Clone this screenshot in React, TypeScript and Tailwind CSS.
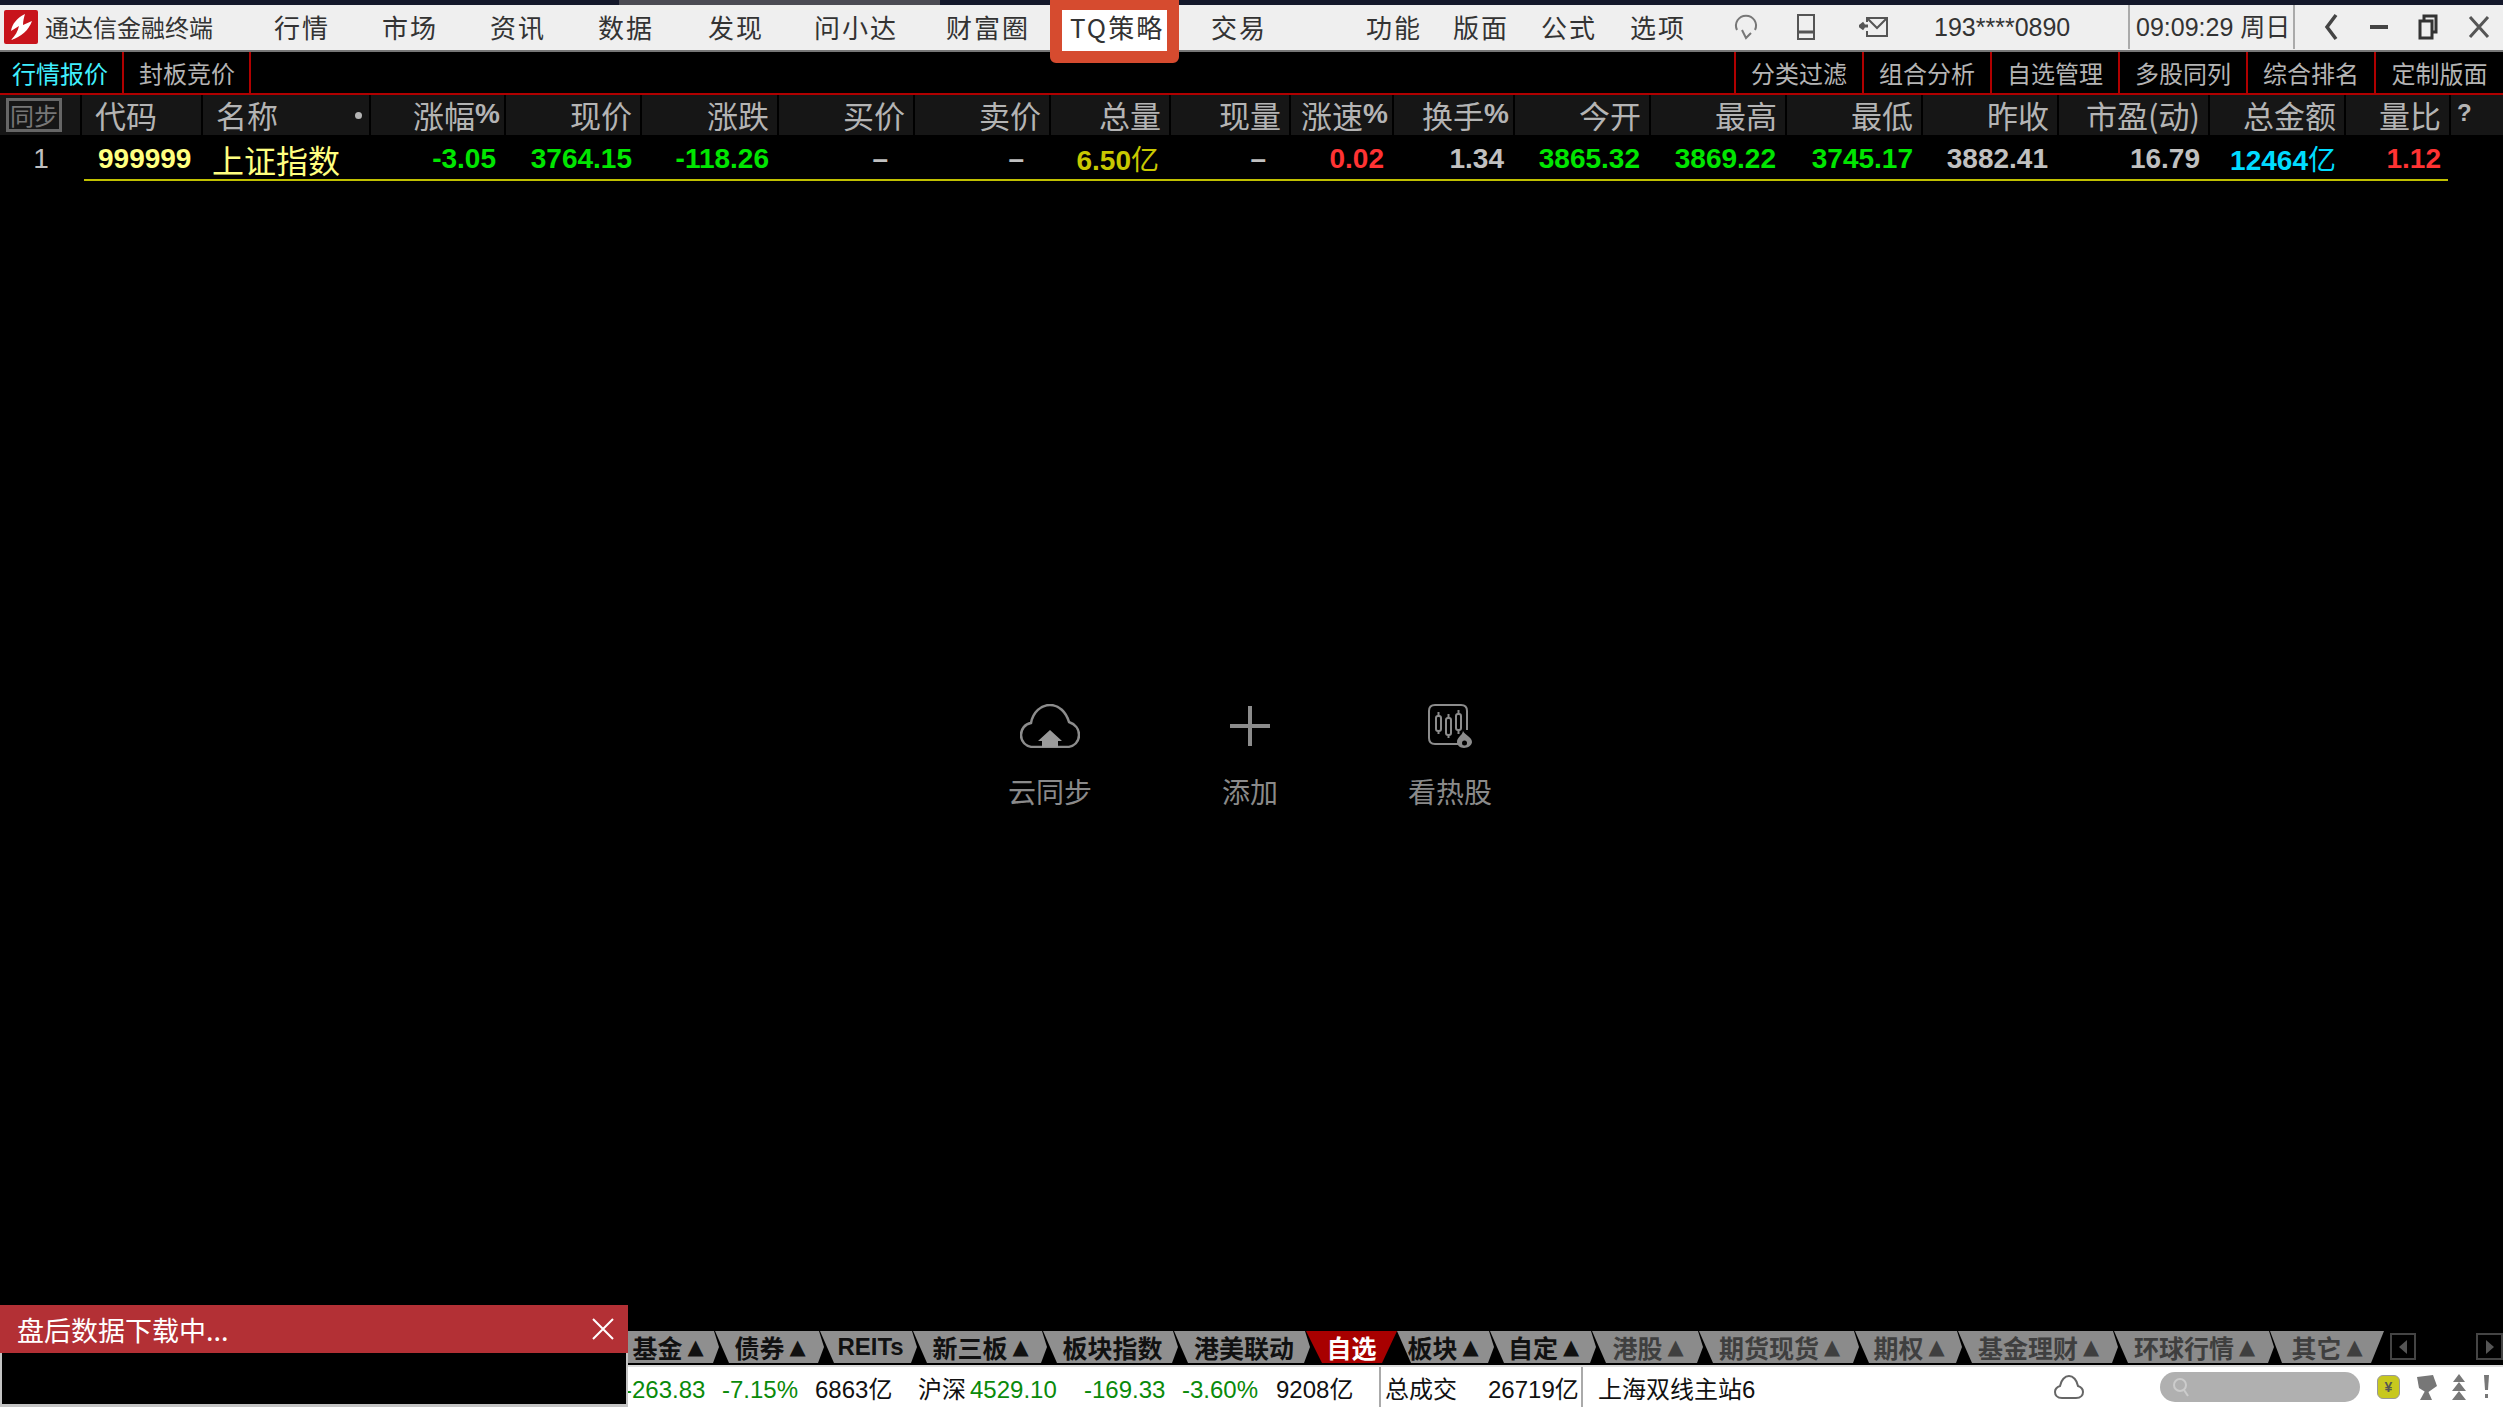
const cjk = "font-['Noto_Sans_CJK_SC',sans-serif]";
const num = "font-['Liberation_Sans','Noto_Sans_CJK_SC',sans-serif]";

const menus = [
  { label: "行情", cls: "ml-[61px] w-[56px]" },
  { label: "市场", cls: "ml-[52px] w-[56px]" },
  { label: "资讯", cls: "ml-[52px] w-[56px]" },
  { label: "数据", cls: "ml-[52px] w-[56px]" },
  { label: "发现", cls: "ml-[54px] w-[56px]" },
  { label: "问小达", cls: "ml-[50px] w-[84px]" },
  { label: "财富圈", cls: "ml-[48px] w-[84px]" },
  { label: "TQ策略", cls: "ml-[40px] w-[96px] relative z-20" },
  { label: "交易", cls: "ml-[45px] w-[56px] relative z-20" },
  { label: "功能", cls: "ml-[99px] w-[56px]" },
  { label: "版面", cls: "ml-[31px] w-[56px]" },
  { label: "公式", cls: "ml-[32px] w-[56px]" },
  { label: "选项", cls: "ml-[33px] w-[56px]" },
];

const rightTools = ["分类过滤", "组合分析", "自选管理", "多股同列", "综合排名", "定制版面"];

const gridCols =
  "grid-cols-[82px_121px_168px_135px_136px_137px_136px_136px_120px_120px_103px_121px_136px_136px_136px_136px_151px_136px_105px_52px]";

const heads = ["涨幅%", "现价", "涨跌", "买价", "卖价", "总量", "现量", "涨速%", "换手%", "今开", "最高", "最低", "昨收", "市盈(动)", "总金额", "量比"];

const values = [
  { v: "-3.05", cls: "text-[#00e600] pr-[10px]" },
  { v: "3764.15", cls: "text-[#00e600] pr-[10px]" },
  { v: "-118.26", cls: "text-[#00e600] pr-[10px]" },
  { v: "–", cls: "text-[#c0c0c0] pr-[27px]" },
  { v: "–", cls: "text-[#c0c0c0] pr-[27px]" },
  { v: "6.50", unit: true, cls: "text-[#c8c800] pr-[12px]" },
  { v: "–", cls: "text-[#c0c0c0] pr-[25px]" },
  { v: "0.02", cls: "text-[#ff3333] pr-[10px]" },
  { v: "1.34", cls: "text-[#c0c0c0] pr-[11px]" },
  { v: "3865.32", cls: "text-[#00e600] pr-[11px]" },
  { v: "3869.22", cls: "text-[#00e600] pr-[11px]" },
  { v: "3745.17", cls: "text-[#00e600] pr-[10px]" },
  { v: "3882.41", cls: "text-[#c0c0c0] pr-[11px]" },
  { v: "16.79", cls: "text-[#c0c0c0] pr-[10px]" },
  { v: "12464", unit: true, cls: "text-[#00dcff] pr-[10px]" },
  { v: "1.12", cls: "text-[#ff3333] pr-[10px]" },
];

const tabs = [
  { label: "基金", arrow: true, w: "w-[92px] pr-[12px]", dark: true, first: true },
  { label: "债券", arrow: true, w: "w-[110px]", dark: true },
  { label: "REITs", w: "w-[98px] pl-[3px]", dark: true },
  { label: "新三板", arrow: true, w: "w-[135px]", dark: true },
  { label: "板块指数", w: "w-[136px] pl-[3px]", dark: true },
  { label: "港美联动", w: "w-[137px] pl-[3px]", dark: true },
  { label: "自选", w: "w-[91px]", active: true },
  { label: "板块", arrow: true, w: "w-[98px] pr-[6px]", dark: true },
  { label: "自定", arrow: true, w: "w-[107px]", dark: true },
  { label: "港股", arrow: true, w: "w-[112px]" },
  { label: "期货现货", arrow: true, w: "w-[161px]" },
  { label: "期权", arrow: true, w: "w-[108px]" },
  { label: "基金理财", arrow: true, w: "w-[161px]" },
  { label: "环球行情", arrow: true, w: "w-[161px]" },
  { label: "其它", arrow: true, w: "w-[114px]", last: true },
];

const statusCell = "flex items-center pt-[5px]";

function Logo() {
  return (
    <div className="w-[34px] h-[34px] rounded-[2px] bg-[#c8141c] flex items-center justify-center shrink-0">
      <svg width="26" height="28" viewBox="0 0 26 28">
        <path d="M17 1 C9 5 4 11 3 18 L11 13 C10 18 7 23 3 27 C13 24 21 17 24 8 L15 12 C15 8 16 4 17 1 Z" fill="#fff" />
      </svg>
    </div>
  );
}

function TopIcons() {
  return (
    <div className="flex items-center">
      <svg className="ml-[46px]" width="28" height="26" viewBox="0 0 28 26" fill="none" stroke="#777" strokeWidth="2">
        <path d="M5 16 A10 10 0 1 1 23 16 M10 16 L14 24 L19 19" />
      </svg>
      <svg className="ml-[37px]" width="18" height="26" viewBox="0 0 18 26" fill="none" stroke="#555" strokeWidth="2">
        <rect x="1" y="1" width="16" height="24" />
        <path d="M1 18 H17" strokeWidth="3" />
      </svg>
      <svg className="ml-[44px]" width="30" height="22" viewBox="0 0 30 22" fill="none" stroke="#555" strokeWidth="2">
        <path d="M8 6 L8 2 H28 V20 H8 V15" />
        <path d="M9 3 L18 12 L27 3" />
        <path d="M1 10 H9 M5 7 L1 10 L5 13" strokeWidth="3" />
      </svg>
    </div>
  );
}

function WindowButtons() {
  return (
    <div className="flex items-center">
      <svg className="ml-[28px]" width="16" height="28" viewBox="0 0 16 28" fill="none" stroke="#444" strokeWidth="3.5">
        <path d="M13 2 L4 14 L13 26" />
      </svg>
      <div className="ml-[31px] w-[18px] h-[4px] bg-[#444]" />
      <svg className="ml-[30px]" width="20" height="26" viewBox="0 0 20 26" fill="none" stroke="#333" strokeWidth="3">
        <path d="M6 6 V2 H18 V18 H14" />
        <rect x="2" y="7" width="12" height="17" />
      </svg>
      <svg className="ml-[30px]" width="22" height="24" viewBox="0 0 22 24" stroke="#555" strokeWidth="3">
        <path d="M2 2 L20 22 M20 2 L2 22" />
      </svg>
    </div>
  );
}

function CloudIcon() {
  return (
    <svg width="60" height="44" viewBox="0 0 60 44" fill="none">
      <path
        d="M14 43 C5 43 1 37 1 31 C1 25 5 20 11 19 C13 8 21 1 30 1 C39 1 46 8 49 18 C55 20 59 25 59 31 C59 37 55 43 46 43 Z"
        stroke="#8c8c8c"
        strokeWidth="2.5"
      />
      <path d="M30 26 L42 37 H38 V43 H22 V37 H18 Z" fill="#9a9a9a" />
    </svg>
  );
}

function PlusIcon() {
  return (
    <svg width="40" height="40" viewBox="0 0 40 40">
      <path d="M18 0 H22 V18 H40 V22 H22 V40 H18 V22 H0 V18 H18 Z" fill="#8c8c8c" />
    </svg>
  );
}

function HotIcon() {
  return (
    <svg width="46" height="44" viewBox="0 0 46 44" fill="none" stroke="#8c8c8c" strokeWidth="2">
      <path d="M34 40 H8 C4 40 2 38 2 34 V7 C2 3 4 1 8 1 H34 C38 1 40 3 40 7 V26" />
      <rect x="9" y="12" width="5" height="15" rx="2" />
      <path d="M11.5 8 V12 M11.5 27 V30" />
      <rect x="19" y="14" width="5" height="17" rx="2" />
      <path d="M21.5 10 V14 M21.5 31 V34" />
      <rect x="29" y="10" width="5" height="16" rx="2" />
      <path d="M31.5 6 V10 M31.5 26 V30" />
      <path d="M36 27 C38 31 45 33 45 38 C45 41 41 44 37 44 C33 44 30 41 30 38 C30 33 35 32 36 27 Z" fill="#8c8c8c" stroke="none" />
      <circle cx="37.5" cy="39" r="2.5" fill="#000" stroke="none" />
    </svg>
  );
}

function Action({ icon, label }: { icon: React.ReactNode; label: string }) {
  return (
    <div className="w-[80px] flex flex-col items-center">
      <div className="h-[44px] flex items-center justify-center">{icon}</div>
      <div className="mt-[26px] text-[28px] leading-[34px] text-[#8a8a8a] whitespace-nowrap">{label}</div>
    </div>
  );
}

function Tab({ tab }: { tab: (typeof tabs)[number] }) {
  const shape = tab.active
    ? "bg-[#a80000] text-white [clip-path:polygon(0_0,100%_0,calc(100%-15px)_100%,16px_100%)]"
    : tab.last
      ? "bg-[#8b8b8b] text-[#3f3f3f] [clip-path:polygon(0_0,100%_0,calc(100%-13px)_100%,12px_100%)]"
      : tab.first
        ? "bg-[#8f8f8f] text-[#111] -mr-[5px] [clip-path:polygon(0_0,calc(100%-6px)_0,calc(100%-1px)_50%,calc(100%-7px)_100%,0_100%)]"
        : tab.dark
          ? "bg-[#8f8f8f] text-[#111] -mr-[5px] [clip-path:polygon(0_0,calc(100%-6px)_0,calc(100%-1px)_50%,calc(100%-7px)_100%,14px_100%)]"
          : "bg-[#8b8b8b] text-[#3f3f3f] -mr-[5px] [clip-path:polygon(0_0,calc(100%-6px)_0,calc(100%-1px)_50%,calc(100%-7px)_100%,14px_100%)]";
  return (
    <div className={`${tab.w} ${shape} h-[32px] shrink-0 flex items-center justify-center text-[25px] font-bold leading-none whitespace-nowrap`}>
      {tab.label === "REITs" ? <span className={`${num} text-[24px]`}>REITs</span> : tab.label}
      {tab.arrow && <span className="font-['DejaVu_Sans'] text-[21px] ml-[5px]">▲</span>}
    </div>
  );
}

export default function App() {
  return (
    <div className={`${cjk} relative w-[2503px] h-[1407px] overflow-hidden bg-black flex flex-col`}>
      {/* title strip */}
      <div className="flex h-[5px] shrink-0 bg-[#14182b]">
        <div className="w-[619px]" />
        <div className="w-[321px] bg-[#4b4b54]" />
      </div>

      {/* menu bar */}
      <div className="h-[45px] shrink-0 bg-[#efefef] flex items-center pl-[4px] pb-[1px] text-[26px] tracking-[2px] text-[#333] leading-none">
        <Logo />
        <div className="ml-[7px] w-[168px] text-[24px] tracking-[0] whitespace-nowrap">通达信金融终端</div>
        {menus.map((m) => (
          <div key={m.label} className={`${m.cls} whitespace-nowrap`}>
            {m.label}
          </div>
        ))}
        <TopIcons />
        <div className={`${num} ml-[45px] w-[194px] text-[25px] tracking-[0] text-[#333]`}>193****0890</div>
        <div className="w-[2px] h-[44px] bg-[#aaa]" />
        <div className={`${num} w-[163px] pl-[6px] text-[25px] tracking-[0] whitespace-nowrap`}>09:09:29 周日</div>
        <div className="w-[2px] h-[44px] bg-[#aaa]" />
        <WindowButtons />
      </div>
      <div className="h-[2px] shrink-0 bg-[#777]" />

      {/* TQ highlight */}
      <div className="absolute left-[1050px] top-0 w-[129px] h-[63px] z-10 bg-white border-x-[12px] border-t-[10px] border-b-[12px] border-[#d64b2f] rounded-b-[6px]" />

      {/* sub toolbar */}
      <div className="h-[41px] shrink-0 flex text-[24px] text-[#b4b4b4]">
        <div className="w-[124px] pl-[12px] border-r-2 border-[#b00000] flex items-center text-[#40f0ff]">行情报价</div>
        <div className="w-[127px] pl-[15px] border-r-2 border-[#b00000] flex items-center">封板竞价</div>
        <div className="ml-auto flex">
          {rightTools.map((t) => (
            <div key={t} className="w-[128px] border-l-2 border-[#b00000] flex items-center justify-center whitespace-nowrap last:w-[129px]">
              {t}
            </div>
          ))}
        </div>
      </div>
      <div className="h-[2px] shrink-0 bg-[#b00000]" />

      {/* column headers */}
      <div className={`grid ${gridCols} h-[40px] shrink-0 text-[31px] leading-none text-[#b4b4b4]`}>
        <div className="bg-[#161616] border-r-2 border-black flex items-center pl-[6px]">
          <div className="w-[56px] h-[34px] border-[3px] border-[#666] text-[#777] text-[24px] flex items-center justify-center whitespace-nowrap">同步</div>
        </div>
        <div className="bg-[#161616] border-r-2 border-black flex items-center pl-[13px] pb-[2px]">代码</div>
        <div className="relative bg-[#161616] border-r-2 border-black flex items-center pl-[13px] pb-[2px]">
          名称
          <div className="absolute right-[7px] top-[17px] w-[7px] h-[7px] rounded-full bg-[#b4b4b4]" />
        </div>
        {heads.map((h) => (
          <div
            key={h}
            className={`bg-[#161616] border-r-2 border-black flex items-center justify-end pb-[2px] whitespace-nowrap ${h.endsWith("%") ? "pr-[4px]" : "pr-[8px]"}`}
          >
            {h.endsWith("%") ? (
              <>
                {h.slice(0, -1)}
                <span className={`${num} text-[28px] font-bold`}>%</span>
              </>
            ) : (
              h
            )}
          </div>
        ))}
        <div className="bg-[#161616] flex items-center pl-[6px] pb-[4px]">
          <span className={`${num} text-[24px] font-bold`}>?</span>
        </div>
      </div>

      {/* quote row */}
      <div className={`relative grid ${gridCols} h-[46px] shrink-0 items-center pt-[2px] ${num} text-[28px] font-bold leading-none`}>
        <div className="text-[#c0c0c0] font-normal text-center">1</div>
        <div className="pl-[16px] text-[#ffff80]">999999</div>
        <div className={`${cjk} pl-[9px] text-[32px] font-normal text-[#ffff80]`}>上证指数</div>
        {values.map((c, i) => (
          <div key={i} className={`${c.cls} text-right whitespace-nowrap`}>
            {c.v}
            {c.unit && <span className={`${cjk} text-[28px] font-normal`}>亿</span>}
          </div>
        ))}
        <div className="absolute left-[84px] right-[55px] bottom-0 h-[2px] bg-[#c0c000]" />
      </div>

      {/* empty state */}
      <div className="flex-1 flex items-center justify-center gap-x-[120px] pr-[3px]">
        <Action icon={<CloudIcon />} label="云同步" />
        <Action icon={<PlusIcon />} label="添加" />
        <Action icon={<HotIcon />} label="看热股" />
      </div>

      {/* sheet tabs */}
      <div className="h-[34px] shrink-0 flex pl-[628px]">
        {tabs.map((t) => (
          <Tab key={t.label} tab={t} />
        ))}
        <div className="ml-[6px] mt-[2px] w-[26px] h-[27px] border-2 border-[#444] flex items-center justify-center">
          <div className="w-0 h-0 border-y-[7px] border-y-transparent border-r-[8px] border-r-[#555]" />
        </div>
        <div className="ml-[60px] mt-[2px] w-[27px] h-[27px] border-2 border-[#444] flex items-center justify-center">
          <div className="w-0 h-0 border-y-[7px] border-y-transparent border-l-[8px] border-l-[#555]" />
        </div>
      </div>
      <div className="h-[2px] shrink-0 bg-[#ddd]" />

      {/* status bar */}
      <div className={`${num} h-[40px] shrink-0 bg-white flex items-stretch pl-[624px] text-[24px] leading-none text-[#111] whitespace-nowrap`}>
        <span className={`${statusCell} w-[98px] text-[#0a8a0a]`}>-263.83</span>
        <span className={`${statusCell} w-[93px] text-[#0a8a0a]`}>-7.15%</span>
        <span className={`${statusCell} w-[103px]`}>6863亿</span>
        <span className={`${statusCell} w-[52px]`}>沪深</span>
        <span className={`${statusCell} w-[114px] text-[#0a8a0a]`}>4529.10</span>
        <span className={`${statusCell} w-[98px] text-[#0a8a0a]`}>-169.33</span>
        <span className={`${statusCell} w-[94px] text-[#0a8a0a]`}>-3.60%</span>
        <span className={`${statusCell} w-[103px]`}>9208亿</span>
        <span className={`${statusCell} w-[109px] border-l-2 border-[#aaa] pl-[4px]`}>总成交</span>
        <span className={`${statusCell} w-[93px]`}>26719亿</span>
        <span className={`${statusCell} border-l-2 border-[#aaa] pl-[15px]`}>上海双线主站6</span>
        <div className="ml-auto flex items-center">
          <svg width="30" height="24" viewBox="0 0 30 24" fill="none" stroke="#666" strokeWidth="2">
            <path d="M8 23 C3 23 1 20 1 17 C1 14 3 12 6 11 C7 5 11 1 15 1 C19 1 23 5 24 11 C27 12 29 14 29 17 C29 20 27 23 22 23 Z" />
          </svg>
          <div className="ml-[76px] w-[200px] h-[30px] rounded-full bg-[#b0b0b0] flex items-center pl-[12px]">
            <svg width="18" height="22" viewBox="0 0 18 22" fill="none" stroke="#ccc" strokeWidth="2">
              <circle cx="8" cy="9" r="6" />
              <path d="M12 14 L16 20" />
            </svg>
          </div>
          <div className="ml-[17px] w-[23px] h-[24px] rounded-[6px] bg-[#c8c81e] border border-[#999] flex items-center justify-center text-[14px] font-bold text-[#555]">¥</div>
          <svg className="ml-[15px]" width="23" height="26" viewBox="0 0 23 26" fill="#777">
            <path d="M2 3 L18 1 L22 12 L12 19 L4 14 Z" />
            <path d="M10 17 H13 L17 26 H5 Z" />
          </svg>
          <svg className="ml-[13px]" width="16" height="26" viewBox="0 0 16 26" fill="#777">
            <path d="M8 0 L14 8 H2 Z M8 8 L15 17 H1 Z M8 17 L15 26 H1 Z" />
          </svg>
          <svg className="ml-[16px] mr-[13px]" width="7" height="24" viewBox="0 0 7 24" fill="#777">
            <path d="M1 0 H6 L5 15 H2 Z" />
            <rect x="2" y="19" width="3" height="4" />
          </svg>
        </div>
      </div>

      {/* download popup */}
      <div className="absolute left-0 top-[1305px] w-[628px] h-[102px] bg-black border-x-2 border-b-[3px] border-[#c4c4c4] border-t-0 z-30">
        <div className="-mx-[2px] h-[48px] bg-[#b33035] flex items-center pl-[17px] pr-[14px] text-[27px] text-white leading-none">
          <span className="flex-1">盘后数据下载中...</span>
          <svg width="22" height="22" viewBox="0 0 22 22" stroke="#fff" strokeWidth="2">
            <path d="M1 1 L21 21 M21 1 L1 21" />
          </svg>
        </div>
      </div>
    </div>
  );
}
